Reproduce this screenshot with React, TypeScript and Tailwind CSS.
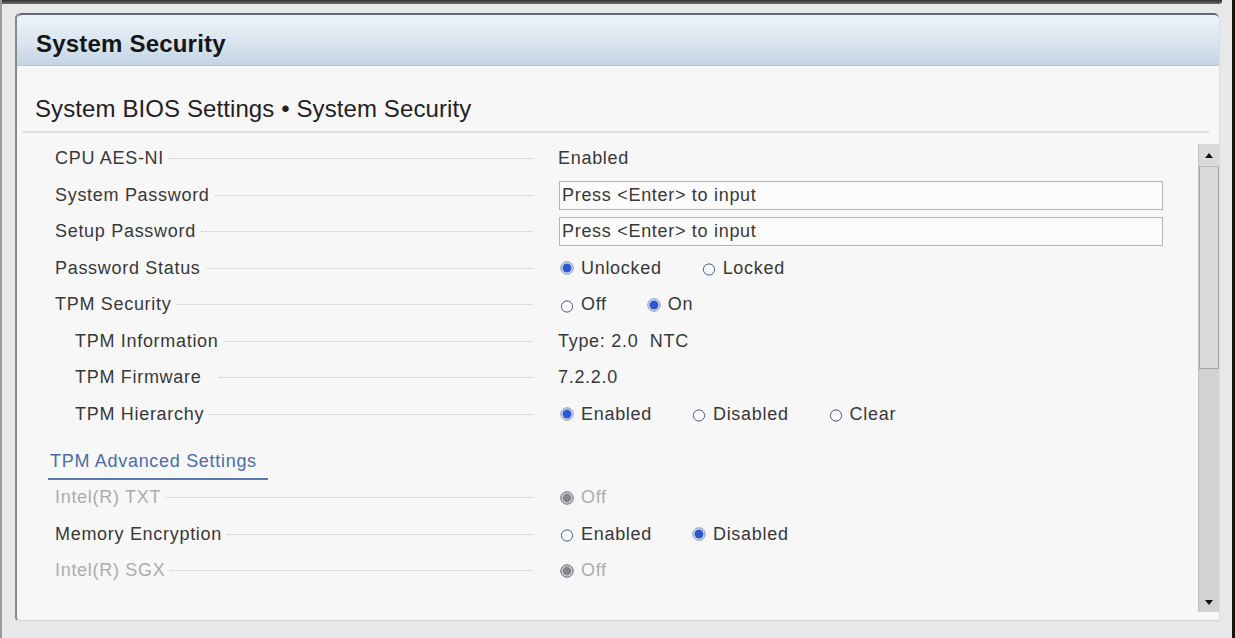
import React from "react";

type Opt = { label: string; checked?: boolean };

function RadioMark({ checked, disabled }: { checked?: boolean; disabled?: boolean }) {
  if (checked && disabled) {
    return (
      <svg width="14" height="14" viewBox="0 0 14 14" className="shrink-0">
        <circle cx="7" cy="7" r="6.2" fill="#d6d6d6" stroke="#56627a" strokeWidth="1" />
        <circle cx="7" cy="7" r="4.4" fill="#858585" />
      </svg>
    );
  }
  if (checked) {
    return (
      <svg width="14" height="14" viewBox="0 0 14 14" className="shrink-0">
        <circle cx="7" cy="7" r="6.2" fill="#dfe6f5" stroke="#7b8fb5" strokeWidth="1" />
        <circle cx="7" cy="7" r="4.5" fill="#2d58cf" />
      </svg>
    );
  }
  return (
    <svg width="14" height="14" viewBox="0 0 14 14" className="shrink-0 translate-y-[1.5px]">
      <circle cx="7" cy="7" r="5.6" fill="#fbfbfb" stroke="#4b5a76" strokeWidth="1" />
    </svg>
  );
}

function RadioGroup({ options, disabled }: { options: Opt[]; disabled?: boolean }) {
  return (
    <div className="flex items-center gap-[40px] pl-[2px]">
      {options.map((o) => (
        <div key={o.label} className="flex items-center gap-[7px]">
          <RadioMark checked={o.checked} disabled={disabled} />
          <span className={disabled ? "text-[#acacac]" : "text-[#383838]"}>{o.label}</span>
        </div>
      ))}
    </div>
  );
}

function Row({
  label,
  indent,
  disabled,
  leaderGap,
  children,
}: {
  label: string;
  indent?: boolean;
  disabled?: boolean;
  leaderGap?: boolean;
  children: React.ReactNode;
}) {
  return (
    <div className="flex items-center h-[36.5px]">
      <div className={`flex items-center w-[516px] ${indent ? "pl-[58px]" : "pl-[38px]"}`}>
        <span className={`whitespace-nowrap ${disabled ? "text-[#acacac]" : "text-[#383838]"}`}>{label}</span>
        <div
          className={`flex-1 h-0 border-t border-dotted border-[#c4c4c4] ${leaderGap ? "ml-[18px]" : "ml-[5px]"}`}
        />
      </div>
      <div className="ml-[25px] flex-1 flex items-center">{children}</div>
    </div>
  );
}

function InputBox({ text }: { text: string }) {
  return (
    <div className="ml-[1px] w-[604px] h-[29px] border border-[#b4b4b4] bg-[#fbfbfb] flex items-center pl-[2px] text-[#383838]">
      {text}
    </div>
  );
}

function Arrow({ up }: { up?: boolean }) {
  return (
    <svg width="8" height="5" viewBox="0 0 8 5">
      <path d={up ? "M0 5 L4 0 L8 5 Z" : "M0 0 L8 0 L4 5 Z"} fill="#111" />
    </svg>
  );
}

export default function App() {
  return (
    <div className="w-[1235px] h-[638px] bg-[#e8e8e8] flex overflow-hidden font-['Liberation_Sans',Arial,sans-serif]">
      <div className="w-[2px] bg-[#9a9a9a]" />
      <div className="flex-1 flex flex-col">
        <div className="h-[4px] mr-[10px] rounded-br-[3px] bg-gradient-to-b from-[#333333] to-[#6e6e6e]" />
        <div className="mt-[9px] ml-[13px] w-[1205px] h-[608px] flex flex-col bg-[#f7f7f7] border-l-2 border-[#888888] rounded-t-[5px] rounded-bl-[4px] border-r border-r-[#dcdcdc] border-b border-b-[#d6d6d6] overflow-hidden">
          <div className="h-[53px] shrink-0 border-t-2 border-[#5f6670] rounded-t-[5px] bg-gradient-to-b from-[#ebf2f9] via-[#dce7f1] to-[#c4d4e4] border-b border-b-[#b9c8d8] flex items-center pt-[8px] pl-[19px]">
            <span className="text-[24px] font-bold tracking-[0.2px] text-[#151515]">System Security</span>
          </div>
          <div className="h-[65px] shrink-0 pt-[25px] pl-[18px] text-[24px] tracking-[0.1px] text-[#222222]">
            System BIOS Settings • System Security
          </div>
          <div className="h-[2px] shrink-0 ml-[5px] mr-[10px] bg-[#e1e1e1]" />
          <div className="flex-1 flex min-h-0">
            <div className="flex-1 pt-[7.5px] text-[18px] tracking-[0.7px]">
              <Row label="CPU AES-NI">
                <span className="text-[#383838]">Enabled</span>
              </Row>
              <Row label="System Password">
                <InputBox text="Press <Enter> to input" />
              </Row>
              <Row label="Setup Password">
                <InputBox text="Press <Enter> to input" />
              </Row>
              <Row label="Password Status">
                <RadioGroup options={[{ label: "Unlocked", checked: true }, { label: "Locked" }]} />
              </Row>
              <Row label="TPM Security">
                <RadioGroup options={[{ label: "Off" }, { label: "On", checked: true }]} />
              </Row>
              <Row label="TPM Information" indent>
                <span className="text-[#383838] whitespace-pre">Type: 2.0  NTC</span>
              </Row>
              <Row label="TPM Firmware" indent leaderGap>
                <span className="text-[#383838]">7.2.2.0</span>
              </Row>
              <Row label="TPM Hierarchy" indent>
                <RadioGroup
                  options={[{ label: "Enabled", checked: true }, { label: "Disabled" }, { label: "Clear" }]}
                />
              </Row>
              <div className="h-[47px] flex items-end ml-[31px]">
                <div className="w-[220px] border-b-2 border-[#5878ad] pb-[3px] pl-[2px] text-[#4a6da6]">
                  TPM Advanced Settings
                </div>
              </div>
              <Row label="Intel(R) TXT" disabled>
                <RadioGroup disabled options={[{ label: "Off", checked: true }]} />
              </Row>
              <Row label="Memory Encryption">
                <RadioGroup options={[{ label: "Enabled" }, { label: "Disabled", checked: true }]} />
              </Row>
              <Row label="Intel(R) SGX" disabled>
                <RadioGroup disabled options={[{ label: "Off", checked: true }]} />
              </Row>
            </div>
            <div className="w-[21px] mt-[11px] flex flex-col bg-[#d2d2d2] border-l border-[#c0c0c0]">
              <div className="h-[22px] flex items-center justify-center bg-[#dadada]">
                <Arrow up />
              </div>
              <div className="h-[203px] bg-[#d9d9d9] border border-[#a6a6a6] border-t-[#bdbdbd]" />
              <div className="flex-1" />
              <div className="h-[20px] flex items-center justify-center">
                <Arrow />
              </div>
            </div>
          </div>
          <div className="h-[8px] shrink-0" />
        </div>
      </div>
      <div className="w-[3px] bg-[#141414]" />
    </div>
  );
}
